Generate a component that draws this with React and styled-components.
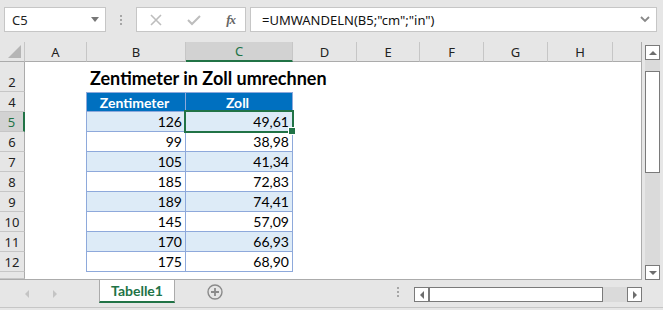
import React from 'react';
import styled, { createGlobalStyle } from 'styled-components';

const GlobalStyle = createGlobalStyle`
  html, body {
    margin: 0;
    padding: 0;
    background: #e6e6e6;
  }
  * {
    box-sizing: border-box;
  }
`;

const COLS = '25px 62px 99px 107px 64px 63px 64px 64px 65px 29px';
const GREEN = '#217346';
const UI_FONT = '"Noto Sans", "Open Sans", sans-serif';
const CELL_FONT = 'Lato, "Noto Sans", sans-serif';

const Window = styled.div`
  width: 663px;
  height: 310px;
  display: flex;
  flex-direction: column;
  background: #e6e6e6;
  overflow: hidden;
  font-family: ${UI_FONT};
`;

const FormulaBar = styled.div`
  height: 42px;
  display: flex;
  align-items: flex-start;
  padding: 7px 6px 0 4px;
`;

const Box = styled.div`
  height: 25px;
  background: #fff;
  border: 1px solid #c6c6c6;
  display: flex;
  align-items: center;
`;

const NameBox = styled(Box)`
  width: 102px;
  padding: 0 6px 0 7px;
  justify-content: space-between;
  font-size: 13px;
  color: #222;
`;

const DropTriangle = styled.span`
  width: 0;
  height: 0;
  border-left: 4px solid transparent;
  border-right: 4px solid transparent;
  border-top: 5px solid #777;
`;

const Grip = styled.div`
  width: 30px;
  height: 25px;
  display: flex;
  flex-direction: column;
  align-items: center;
  justify-content: center;
  gap: 2px;
  span {
    width: 2px;
    height: 2px;
    background: #a6a6a6;
  }
`;

const FxBox = styled(Box)`
  width: 110px;
  padding: 0 10px 0 13px;
  justify-content: space-between;
  color: #bdbdbd;
`;

const FxText = styled.span`
  font-family: "Liberation Serif", serif;
  font-style: italic;
  font-weight: bold;
  font-size: 13px;
  color: #666;
  letter-spacing: -1px;
`;

const FormulaInput = styled(Box)`
  flex: 1;
  margin-left: 4px;
  padding: 0 6px 0 11px;
  justify-content: space-between;
  font-size: 13px;
  color: #111;
`;

const Main = styled.div`
  display: flex;
  height: 238px;
`;

const Sheet = styled.div`
  width: 642px;
  display: flex;
  flex-direction: column;
  border-right: 1px solid #ababab;
  border-bottom: 1px solid #ababab;
  background: #fff;
`;

const Row = styled.div`
  display: grid;
  grid-template-columns: ${COLS};
  height: ${({ $h }) => $h}px;
  flex-shrink: 0;
  overflow: ${({ $raised }) => ($raised ? 'visible' : 'hidden')};
  position: relative;
  z-index: ${({ $raised }) => ($raised ? 1 : 0)};
`;

const ColHead = styled.div`
  background: ${({ $active }) => ($active ? '#d2d2d2' : '#e6e6e6')};
  border-right: 1px solid #c6c6c6;
  border-bottom: ${({ $active }) => ($active ? `2px solid ${GREEN}` : '1px solid #ababab')};
  display: flex;
  align-items: center;
  justify-content: center;
  font-size: 13px;
  color: ${({ $active }) => ($active ? GREEN : '#222')};
  &:last-child {
    border-right: none;
  }
`;

const Corner = styled(ColHead)`
  position: relative;
  &::after {
    content: '';
    position: absolute;
    right: 3px;
    bottom: 3px;
    border-left: 13px solid transparent;
    border-bottom: 13px solid #b5b5b5;
  }
`;

const RowHead = styled.div`
  background: ${({ $active }) => ($active ? '#d2d2d2' : '#e6e6e6')};
  border-right: ${({ $active }) => ($active ? `2px solid ${GREEN}` : '1px solid #ababab')};
  border-bottom: 1px solid #c6c6c6;
  display: flex;
  align-items: ${({ $align }) => $align || 'center'};
  padding-bottom: ${({ $align }) => ($align === 'flex-end' ? '1px' : '0')};
  padding-top: ${({ $align }) => ($align === 'flex-start' ? '3px' : '0')};
  justify-content: center;
  font-size: 13px;
  line-height: 16px;
  color: ${({ $active }) => ($active ? GREEN : '#222')};
  overflow: hidden;
`;

const Blank = styled.div``;

const Title = styled.div`
  grid-column: 3 / span 4;
  display: flex;
  align-items: flex-end;
  padding: 0 0 3px 3px;
  font-family: ${CELL_FONT};
  font-weight: bold;
  font-size: 18px;
  color: #000;
  white-space: nowrap;
`;

const TCell = styled.div`
  position: relative;
  display: flex;
  align-items: center;
  justify-content: ${({ $head }) => ($head ? 'center' : 'flex-end')};
  padding: 0 3px 0 0;
  font-family: ${CELL_FONT};
  font-size: 14px;
  font-weight: ${({ $head }) => ($head ? 'bold' : 'normal')};
  color: ${({ $head }) => ($head ? '#fff' : '#000')};
  background: ${({ $head, $band }) => ($head ? '#0070c0' : $band ? '#ddebf7' : '#fff')};
  border-right: 1px solid #8ea9db;
  border-bottom: 1px solid #8ea9db;
  border-top: ${({ $head }) => ($head ? '1px solid #8ea9db' : 'none')};
  border-left: ${({ $first }) => ($first ? '1px solid #8ea9db' : 'none')};
  margin-left: ${({ $first }) => ($first ? '-1px' : '0')};
`;

const Selection = styled.div`
  position: absolute;
  top: -2px;
  left: -2px;
  right: -2px;
  bottom: -2px;
  border: 2px solid ${GREEN};
  &::after {
    content: '';
    position: absolute;
    right: -4px;
    bottom: -4px;
    width: 6px;
    height: 6px;
    background: ${GREEN};
    border: 1px solid #fff;
  }
`;

const VScroll = styled.div`
  width: 21px;
  display: flex;
  flex-direction: column;
  padding: 3px 3px 0 3px;
`;

const ScrollBtn = styled.div`
  width: 15px;
  height: 15px;
  flex-shrink: 0;
  background: #fff;
  border: 1px solid #7a7a7a;
  display: flex;
  align-items: center;
  justify-content: center;
`;

const Arrow = styled.span`
  width: 0;
  height: 0;
  ${({ $dir }) =>
    $dir === 'up'
      ? 'border-left: 4px solid transparent; border-right: 4px solid transparent; border-bottom: 4px solid #6d6d6d;'
      : $dir === 'down'
      ? 'border-left: 4px solid transparent; border-right: 4px solid transparent; border-top: 4px solid #6d6d6d;'
      : $dir === 'left'
      ? 'border-top: 4px solid transparent; border-bottom: 4px solid transparent; border-right: 4px solid #6d6d6d;'
      : 'border-top: 4px solid transparent; border-bottom: 4px solid transparent; border-left: 4px solid #6d6d6d;'}
`;

const VTrack = styled.div`
  flex: 1;
  background: #dadada;
  padding-top: 11px;
  display: flex;
  flex-direction: column;
`;

const VThumb = styled.div`
  height: 102px;
  background: #fff;
  border: 1px solid #7a7a7a;
`;

const TabBar = styled.div`
  height: 28px;
  display: flex;
  align-items: stretch;
  border-bottom: 1px solid #c6c6c6;
`;

const TabNav = styled.div`
  width: 99px;
  display: flex;
  align-items: center;
  padding-left: 25px;
  gap: 24px;
`;

const NavArrow = styled.span`
  width: 0;
  height: 0;
  border-top: 4px solid transparent;
  border-bottom: 4px solid transparent;
  ${({ $left }) => ($left ? 'border-right: 4px solid #c4c4c4;' : 'border-left: 4px solid #c4c4c4;')}
`;

const Tab = styled.div`
  width: 76px;
  background: #fff;
  border-left: 1px solid #ababab;
  border-right: 1px solid #ababab;
  border-bottom: 2px solid ${GREEN};
  margin-bottom: 4px;
  display: flex;
  align-items: center;
  justify-content: center;
  font-family: ${CELL_FONT};
  font-weight: bold;
  font-size: 14px;
  color: ${GREEN};
`;

const AddSheet = styled.div`
  margin-left: 32px;
  display: flex;
  align-items: center;
  margin-bottom: 4px;
`;

const Spacer = styled.div`
  flex: 1;
`;

const HGrip = styled(Grip)`
  width: 16px;
  height: auto;
  margin-right: 8px;
  margin-bottom: 4px;
`;

const HScroll = styled.div`
  width: 228px;
  height: 15px;
  margin: 7px 21px 0 0;
  display: flex;
  background: #dadada;
`;

const HThumb = styled.div`
  width: 174px;
  background: #fff;
  border: 1px solid #7a7a7a;
`;

const StatusStrip = styled.div`
  flex: 1;
  background: #e6e6e6;
`;

const letters = ['A', 'B', 'C', 'D', 'E', 'F', 'G', 'H', ''];

const data = [
  [126, '49,61'],
  [99, '38,98'],
  [105, '41,34'],
  [185, '72,83'],
  [189, '74,41'],
  [145, '57,09'],
  [170, '66,93'],
  [175, '68,90'],
];

const Rest = ({ from }) =>
  Array.from({ length: 10 - from }, (_, i) => <Blank key={i} />);

const App = () => (
  <Window>
    <GlobalStyle />
    <FormulaBar>
      <NameBox>
        C5
        <DropTriangle />
      </NameBox>
      <Grip>
        <span />
        <span />
        <span />
      </Grip>
      <FxBox>
        <svg width="12" height="12" viewBox="0 0 12 12">
          <path d="M1 1 L11 11 M11 1 L1 11" stroke="#bdbdbd" strokeWidth="1.6" />
        </svg>
        <svg width="14" height="12" viewBox="0 0 14 12">
          <path d="M1 6 L5 10 L13 2" stroke="#bdbdbd" strokeWidth="2" fill="none" />
        </svg>
        <FxText>fx</FxText>
      </FxBox>
      <FormulaInput>
        =UMWANDELN(B5;"cm";"in")
        <svg width="10" height="7" viewBox="0 0 10 7">
          <path d="M1 1 L5 5 L9 1" stroke="#888" strokeWidth="1.8" fill="none" />
        </svg>
      </FormulaInput>
    </FormulaBar>

    <Main>
      <Sheet>
        <Row $h={20}>
          <Corner />
          {letters.map((l, i) => (
            <ColHead key={i} $active={l === 'C'}>
              {l}
            </ColHead>
          ))}
        </Row>
        <Row $h={30}>
          <RowHead $align="flex-end">2</RowHead>
          <Blank />
          <Title>Zentimeter in Zoll umrechnen</Title>
        </Row>
        <Row $h={20}>
          <RowHead>4</RowHead>
          <Blank />
          <TCell $head $first>Zentimeter</TCell>
          <TCell $head>Zoll</TCell>
          <Rest from={4} />
        </Row>
        {data.map(([cm, inch], i) => (
          <Row $h={20} key={i} $raised={i === 0}>
            <RowHead $active={i === 0}>{i + 5}</RowHead>
            <Blank />
            <TCell $first $band={i % 2 === 0}>{cm}</TCell>
            <TCell $band={i % 2 === 0}>
              {inch}
              {i === 0 && <Selection />}
            </TCell>
            <Rest from={4} />
          </Row>
        ))}
        <Row $h={7}>
          <RowHead $align="flex-start">13</RowHead>
        </Row>
      </Sheet>
      <VScroll>
        <ScrollBtn>
          <Arrow $dir="up" />
        </ScrollBtn>
        <VTrack>
          <VThumb />
        </VTrack>
        <ScrollBtn>
          <Arrow $dir="down" />
        </ScrollBtn>
      </VScroll>
    </Main>

    <TabBar>
      <TabNav>
        <NavArrow $left />
        <NavArrow />
      </TabNav>
      <Tab>Tabelle1</Tab>
      <AddSheet>
        <svg width="16" height="16" viewBox="0 0 16 16">
          <circle cx="8" cy="8" r="7" stroke="#8a8a8a" strokeWidth="1.4" fill="none" />
          <path d="M8 4 V12 M4 8 H12" stroke="#8a8a8a" strokeWidth="1.8" />
        </svg>
      </AddSheet>
      <Spacer />
      <HGrip>
        <span />
        <span />
        <span />
      </HGrip>
      <HScroll>
        <ScrollBtn>
          <Arrow $dir="left" />
        </ScrollBtn>
        <HThumb />
        <Spacer />
        <ScrollBtn>
          <Arrow $dir="right" />
        </ScrollBtn>
      </HScroll>
    </TabBar>
    <StatusStrip />
  </Window>
);

export default App;
